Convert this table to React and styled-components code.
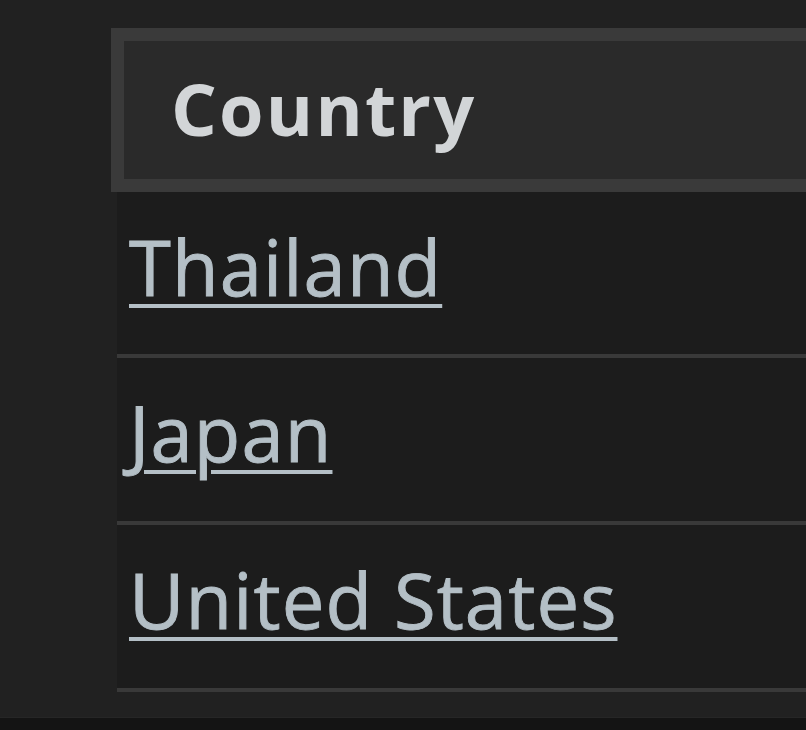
import React from 'react';
import styled, { createGlobalStyle } from 'styled-components';

const GlobalStyle = createGlobalStyle`
  html, body {
    margin: 0;
    padding: 0;
    background: #212121;
    overflow: hidden;
  }
`;

const Page = styled.div`
  width: 806px;
  height: 730px;
  display: flex;
  flex-direction: column;
  background: #212121;
  font-family: "Open Sans", "Noto Sans", sans-serif;
`;

const Table = styled.div`
  flex: 1;
  display: flex;
  flex-direction: column;
  padding: 28px 0 0 111px;
`;

const HeaderCell = styled.div`
  box-sizing: border-box;
  height: 164px;
  border: 13px solid #3a3a3a;
  border-right: none;
  background: #2a2a2a;
  padding: 19px 0 0 47px;
  color: #d2d5d7;
  font-size: 72px;
  font-weight: 700;
  line-height: 1.36;
  letter-spacing: 2.2px;
`;

const Rows = styled.div`
  display: flex;
  flex-direction: column;
  margin-left: 6px;
`;

const Row = styled.div`
  box-sizing: border-box;
  height: ${p => p.h}px;
  padding: 23px 0 0 12px;
  background: #1c1c1c;
  border-bottom: 4px solid #393939;
  line-height: 1.36;
`;

const CountryLink = styled.a`
  color: #b4bfc6;
  font-size: 76px;
  text-decoration: underline;
  text-decoration-thickness: 4px;
  text-underline-offset: 8px;
  letter-spacing: 1.1px;
  -webkit-text-stroke: 0.9px #b4bfc6;
`;

const Footer = styled.div`
  height: 12px;
  background: #141414;
  border-top: 1px solid #262626;
`;

const countries = [
  { name: 'Thailand', h: 166 },
  { name: 'Japan', h: 167 },
  { name: 'United States', h: 167 },
];

export default function App() {
  return (
    <Page>
      <GlobalStyle />
      <Table>
        <HeaderCell>Country</HeaderCell>
        <Rows>
          {countries.map(c => (
            <Row key={c.name} h={c.h}>
              <CountryLink href="#">{c.name}</CountryLink>
            </Row>
          ))}
        </Rows>
      </Table>
      <Footer />
    </Page>
  );
}
